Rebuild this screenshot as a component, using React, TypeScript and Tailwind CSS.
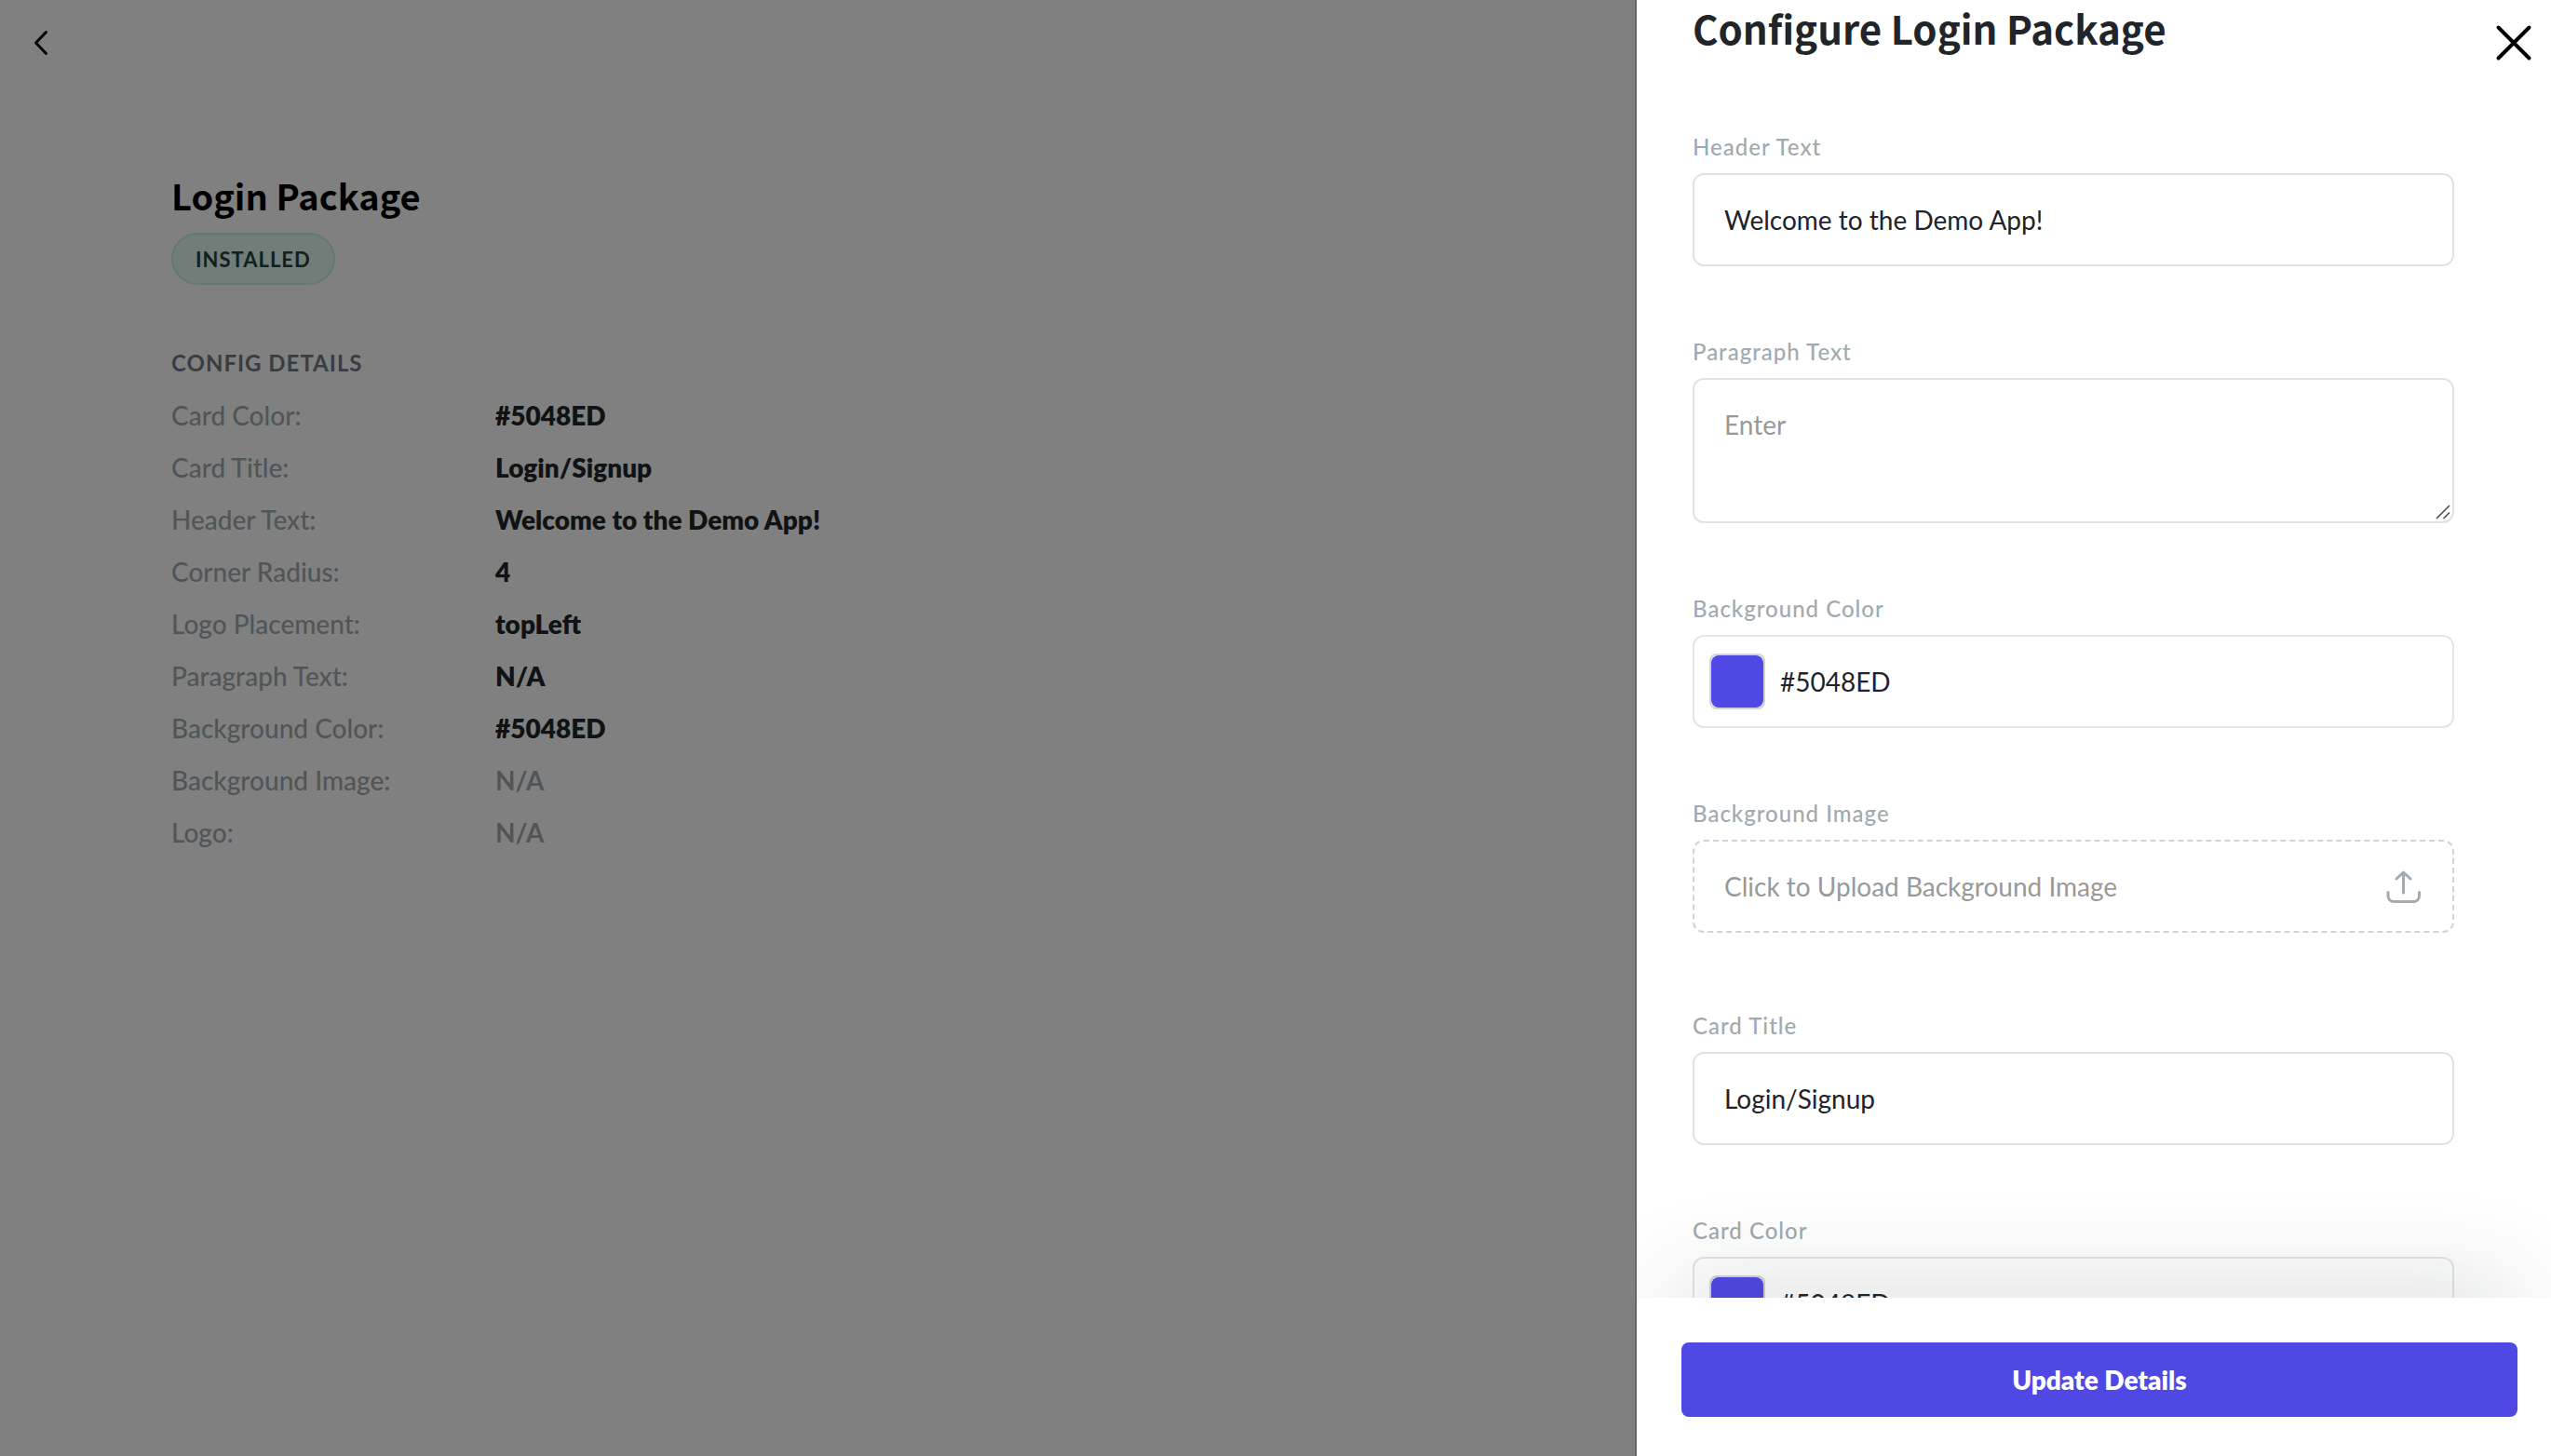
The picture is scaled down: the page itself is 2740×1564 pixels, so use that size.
import { useId, useState, type ReactNode } from "react";

const details = [
  { label: "Card Color:", value: "#5048ED" },
  { label: "Card Title:", value: "Login/Signup" },
  { label: "Header Text:", value: "Welcome to the Demo App!" },
  { label: "Corner Radius:", value: "4" },
  { label: "Logo Placement:", value: "topLeft" },
  { label: "Paragraph Text:", value: "N/A" },
  { label: "Background Color:", value: "#5048ED" },
  { label: "Background Image:", value: "N/A", muted: true },
  { label: "Logo:", value: "N/A", muted: true },
];

function Field({ id, label, children }: { id: string; label: string; children: ReactNode }) {
  return (
    <div className="flex flex-col gap-[10px]">
      <label htmlFor={id} className="text-2xl leading-9 font-medium tracking-[1px] text-[#a0aab0]">
        {label}
      </label>
      {children}
    </div>
  );
}

function TextField({ label, initial }: { label: string; initial: string }) {
  const id = useId();
  const [value, setValue] = useState(initial);
  return (
    <Field id={id} label={label}>
      <input
        id={id}
        type="text"
        value={value}
        onChange={(e) => setValue(e.target.value)}
        className="h-[100px] w-full rounded-xl border-2 border-[#dfe3e8] bg-white px-8 text-[28px] text-[#212329]"
      />
    </Field>
  );
}

function ColorField({ label, initial }: { label: string; initial: string }) {
  const id = useId();
  const [value, setValue] = useState(initial);
  return (
    <Field id={id} label={label}>
      <div className="flex h-[100px] items-center gap-4 rounded-xl border-2 border-[#e4e5eb] px-4">
        <button
          type="button"
          aria-label={`Pick ${label}`}
          className="size-[60px] shrink-0 rounded-lg border-2 border-[#d3d3d3]"
        >
          <span className="block size-full rounded-lg bg-[#5048e5]" />
        </button>
        <input
          id={id}
          type="text"
          value={value}
          onChange={(e) => setValue(e.target.value)}
          className="h-full min-w-0 flex-1 bg-transparent text-[28px] text-[#212329] outline-none"
        />
      </div>
    </Field>
  );
}

export default function App() {
  return (
    <div className="flex h-screen overflow-hidden bg-[#808080] font-['Lato',sans-serif]">
      <main className="min-w-0 flex-1">
        <button type="button" aria-label="Back" className="mt-[26px] ml-6 flex size-10 items-center justify-center">
          <svg viewBox="0 0 40 40" className="size-10" fill="none" stroke="#000" strokeWidth="3" strokeLinecap="round" strokeLinejoin="round">
            <path d="M25.5 8.5 14.500 20l11 11.500" />
          </svg>
        </button>
        <div className="mt-[114px] px-[184px]">
          <h1 className="font-['Noto_Sans_CJK_JP',sans-serif] text-[38px] leading-[60px] font-bold text-black">
            Login Package
          </h1>
          <span className="mt-[10px] flex h-14 w-fit items-center rounded-[28px] border-2 border-[#5c7c71] bg-[#727c79] px-6 text-[22px] font-bold tracking-[1px] text-[#11211c]">
            INSTALLED
          </span>
          <h2 className="mt-[66px] text-2xl leading-9 font-bold tracking-[1px] text-[#383c43]">CONFIG DETAILS</h2>
          <dl className="mt-[10px]">
            {details.map((d) => (
              <div key={d.label} className="flex h-14 items-center text-[28px] leading-9">
                <dt className="w-[348px] shrink-0 font-medium text-[#505558]">{d.label}</dt>
                <dd className={d.muted ? "font-bold text-[#505558]" : "font-extrabold text-[#101214]"}>{d.value}</dd>
              </div>
            ))}
          </dl>
        </div>
      </main>

      <aside className="flex w-[984px] shrink-0 flex-col overflow-hidden border-l-2 border-[#69696a] bg-white">
        <div className="flex min-h-0 flex-1 items-start overflow-hidden">
          <form id="config" className="min-w-0 flex-1 pl-[60px]">
            <h2 className="font-['Noto_Sans_CJK_JP',sans-serif] text-[42px] leading-[60px] font-bold text-[#212529]">
              Configure Login Package
            </h2>
            <div className="mt-20 flex flex-col gap-[74px]">
              <TextField label="Header Text" initial="Welcome to the Demo App!" />
              <Field id="paragraph" label="Paragraph Text">
                <div className="relative">
                  <textarea
                    id="paragraph"
                    placeholder="Enter"
                    className="block h-[156px] w-full resize-y rounded-xl border-2 border-[#dfe3e8] px-8 py-7 text-[28px] leading-10 placeholder:text-[#999] [&::-webkit-resizer]:hidden"
                  />
                  <svg viewBox="0 0 16 16" className="pointer-events-none absolute right-1 bottom-1 size-4" fill="none" stroke="#444" strokeWidth="1.5">
                    <path d="M1 15 15 1M8.500 15 15 8.500" />
                  </svg>
                </div>
              </Field>
              <ColorField label="Background Color" initial="#5048ED" />
              <div className="pb-2">
                <Field id="bgimage" label="Background Image">
                  <button
                    id="bgimage"
                    type="button"
                    className="flex h-[100px] w-full items-center justify-between rounded-xl border-2 border-dashed border-[#d3d3d3] px-8 text-[28px] text-[#999]"
                  >
                    Click to Upload Background Image
                    <svg viewBox="0 0 40 40" className="size-10" fill="none" stroke="#a3abb1" strokeWidth="3" strokeLinecap="round" strokeLinejoin="round">
                      <path d="M19.500 27V5M12 12 19.500 5 27 12M3 26.500V30.500a6 6 0 0 0 6 6H30.500a6 6 0 0 0 6-6V26.500" />
                    </svg>
                  </button>
                </Field>
              </div>
              <TextField label="Card Title" initial="Login/Signup" />
              <ColorField label="Card Color" initial="#5048ED" />
            </div>
          </form>
          <button type="button" aria-label="Close" className="mt-[22px] mr-4 ml-10 flex size-12 shrink-0 items-center justify-center">
            <svg viewBox="0 0 48 48" className="size-12" fill="none" stroke="#000" strokeWidth="4" strokeLinecap="round">
              <path d="M7.500 7.500 40.500 40.500M40.500 7.500 7.500 40.500" />
            </svg>
          </button>
        </div>
        <div className="relative bg-white pt-12 pr-9 pb-[42px] pl-12 shadow-[0_-60px_96px_-36px_rgba(33,41,48,0.13)]">
          <button type="submit" form="config" className="h-20 w-full rounded-lg bg-[#5048e5] text-[28px] font-extrabold text-white">
            Update Details
          </button>
        </div>
      </aside>
    </div>
  );
}
